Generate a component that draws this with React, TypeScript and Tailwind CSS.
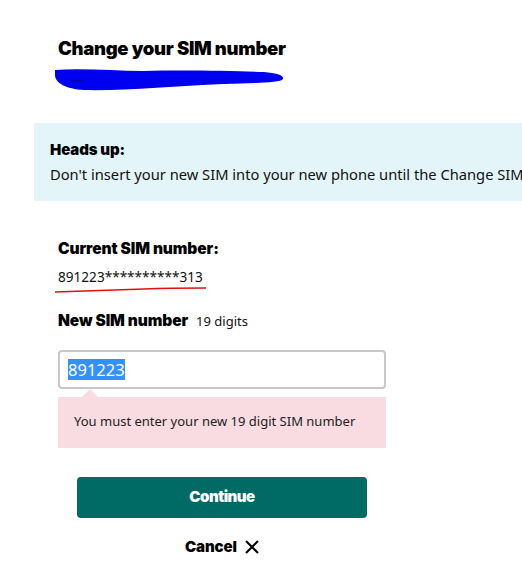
import React from 'react';

const heavy = { fontFamily: 'Inter, "Liberation Sans", Arial, sans-serif' };

export default function App() {
  return (
    <div className="w-[522px] h-[583px] overflow-hidden bg-white text-black" style={{ fontFamily: '"Noto Sans", "Open Sans", sans-serif' }}>
      {/* Title */}
      <div className="pl-[58px] pt-[36px]">
        <h1 className="text-[18.5px] leading-[24px] font-black tracking-[-0.3px] text-black" style={heavy}>
          Change your SIM number
        </h1>
        {/* Redacted scribble */}
        <svg className="-ml-[4px] mt-[7px] block" width="232" height="26" viewBox="0 0 232 26">
          <path
            d="M1 3 C30 1 60 4 90 4 C130 3 180 4 210 5 C222 6 230 8 229 12 C226 16 200 16 170 17 C120 19 70 24 30 23 C12 22 1 16 1 8 Z"
            fill="#0000f0"
          />
          <path d="M17 14 L30 14" stroke="#000080" strokeWidth="1" />
        </svg>
      </div>

      {/* Info banner */}
      <div className="ml-[34px] mt-[30px] h-[78px] bg-[#e3f5f9] pl-[16px] pt-[17px] whitespace-nowrap overflow-hidden">
        <div className="text-[15px] leading-[20px] font-black tracking-[-0.1px]" style={heavy}>Heads up:</div>
        <div className="mt-[4px] text-[14.7px] leading-[20px] text-[#111]">
          Don't insert your new SIM into your new phone until the Change SIM process is complete.
        </div>
      </div>

      {/* Form */}
      <div className="pl-[58px] pt-[38px]">
        <div className="text-[15.5px] leading-[20px] font-black tracking-[-0.1px]" style={heavy}>Current SIM number:</div>
        <div className="relative mt-[8px] w-fit text-[13.6px] leading-[20px] text-[#111]">
          891223**********313
          <svg className="absolute -left-[4px] top-[19px]" width="156" height="8" viewBox="0 0 156 8">
            <path d="M1 6 C30 5 60 4 90 3 C115 2 135 2 152 2" stroke="#e01010" strokeWidth="1.5" fill="none" />
          </svg>
        </div>

        <div className="mt-[24px] flex items-baseline gap-[8px]">
          <span className="text-[15.5px] leading-[20px] font-black tracking-[-0.1px]" style={heavy}>New SIM number</span>
          <span className="text-[13px] text-[#111]">19 digits</span>
        </div>

        <div className="mt-[18px] w-[328px]">
          <div className="h-[39px] rounded-[4px] border-2 border-[#c8c8c8] flex items-center pl-[8px]">
            <span className="bg-[#3390ff] text-white text-[16.5px] leading-[21px]">891223</span>
          </div>
          <div className="relative mt-[8px] h-[51px] bg-[#f8dce1] pl-[16px] flex items-center">
            <div className="absolute -top-[8px] left-[24px] w-0 h-0 border-l-[8px] border-r-[8px] border-b-[8px] border-l-transparent border-r-transparent border-b-[#f8dce1]" />
            <span className="text-[13px] text-[#222]">You must enter your new 19 digit SIM number</span>
          </div>
        </div>

        <button className="mt-[29px] ml-[19px] w-[290px] h-[41px] rounded-[4px] bg-[#006b65] text-white text-[15px] font-black tracking-[-0.5px]" style={heavy}>
          Continue
        </button>

        <div className="mt-[19px] ml-[127px] flex items-center gap-[8px]">
          <span className="text-[15px] leading-[20px] font-black tracking-[-0.1px]" style={heavy}>Cancel</span>
          <svg width="14" height="14" viewBox="0 0 14 14">
            <path d="M1 1 L13 13 M13 1 L1 13" stroke="#000" strokeWidth="2" />
          </svg>
        </div>
      </div>
    </div>
  );
}
